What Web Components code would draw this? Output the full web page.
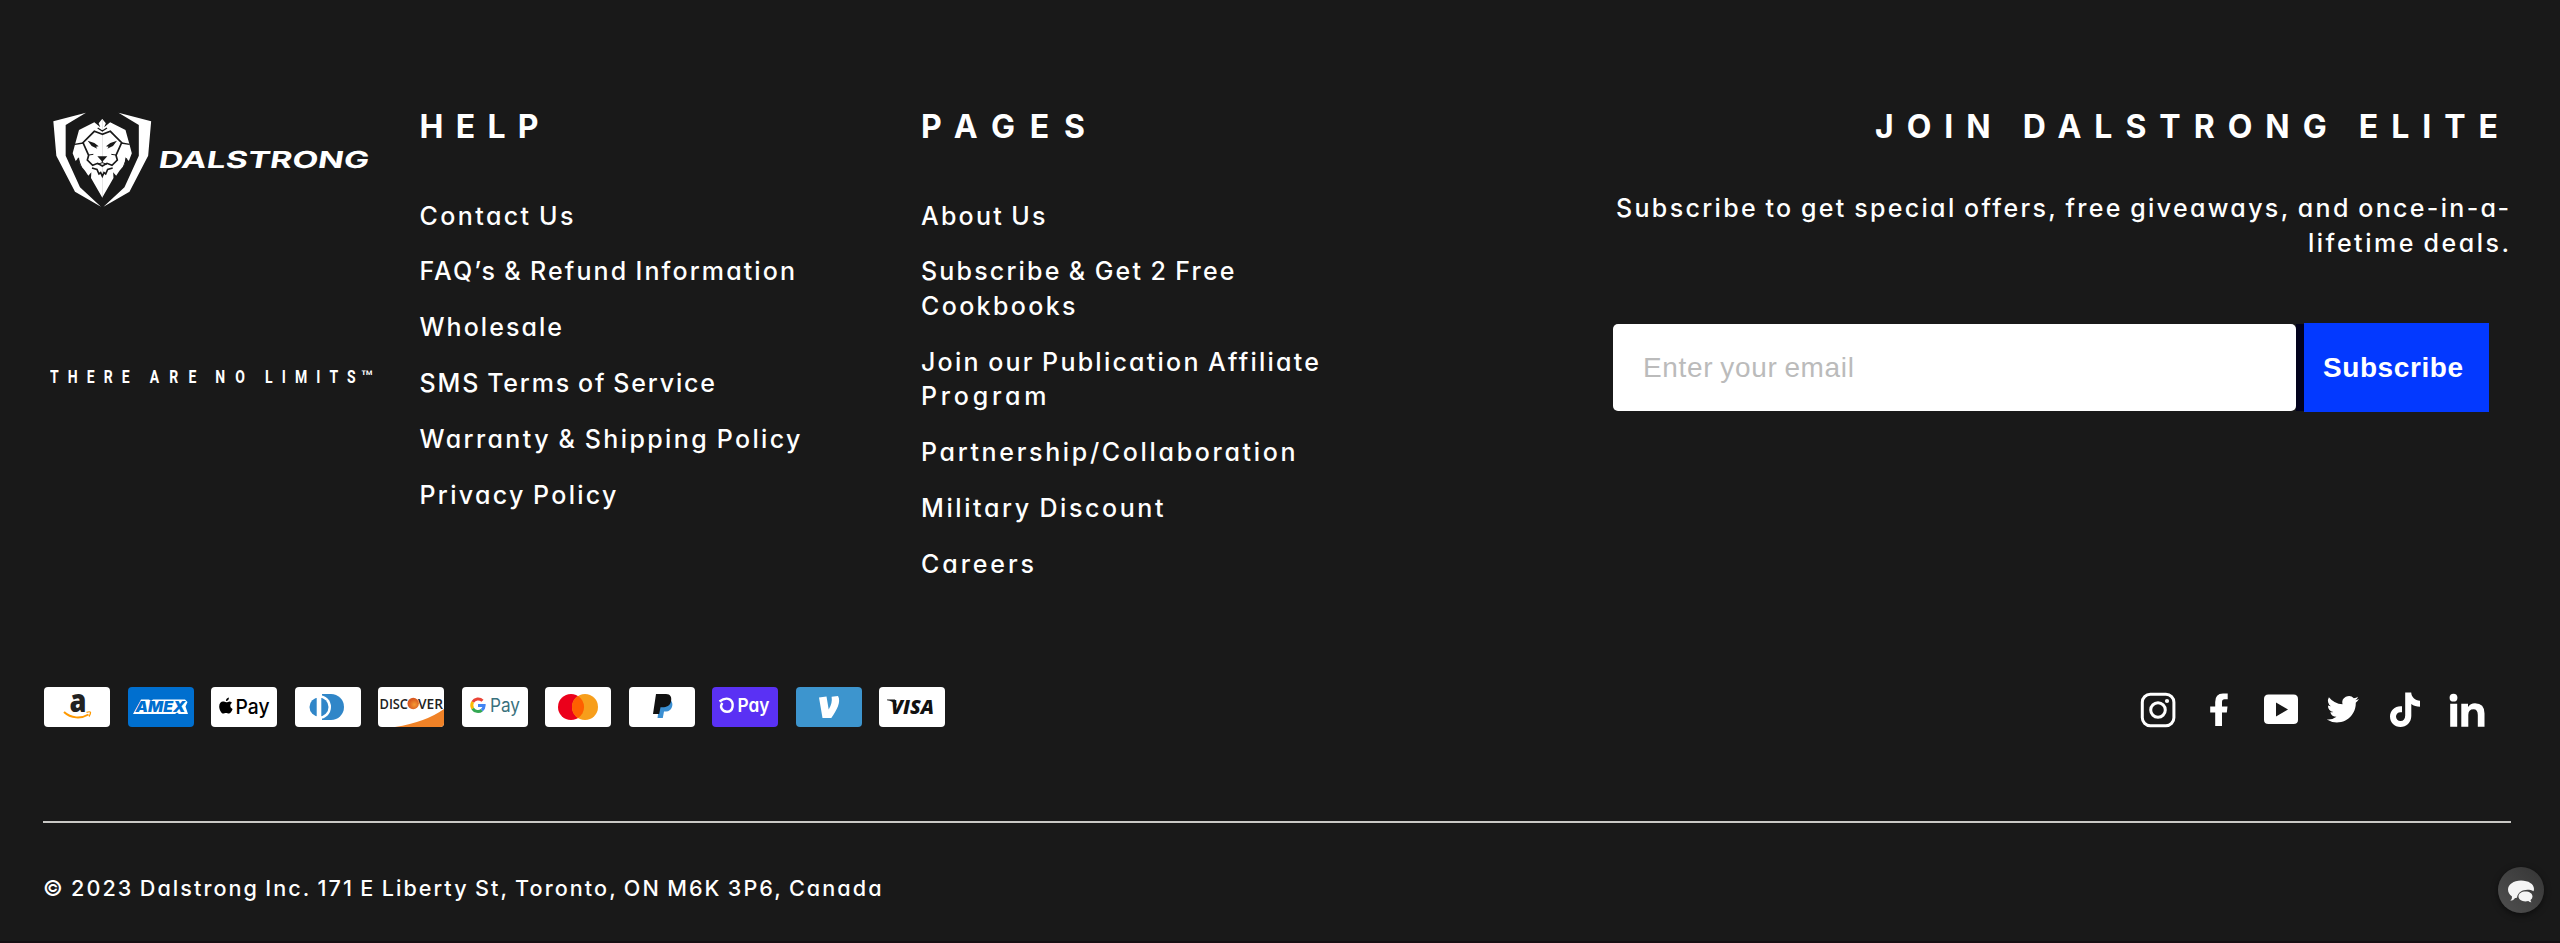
<!DOCTYPE html>
<html lang="en">
<head>
<meta charset="utf-8">
<title>Dalstrong</title>
<style>
html,body{margin:0;background:#191919}
body{color:#fff;font-family:Inter,"Open Sans",sans-serif;overflow:hidden}
</style>
</head>
<body>
<site-footer>
  <brand-mark slot="brand"></brand-mark>
  <link-column slot="nav">
    <fit-text slot="title" w="119">HELP</fit-text>
    <fit-text w="154">Contact Us</fit-text>
    <fit-text w="375.5">FAQ’s &amp; Refund Information</fit-text>
    <fit-text w="142.5">Wholesale</fit-text>
    <fit-text w="295.5">SMS Terms of Service</fit-text>
    <fit-text w="381">Warranty &amp; Shipping Policy</fit-text>
    <fit-text w="197">Privacy Policy</fit-text>
  </link-column>
  <link-column slot="nav">
    <fit-text slot="title" w="164">PAGES</fit-text>
    <fit-text w="124.5">About Us</fit-text>
    <div><fit-text w="313.5">Subscribe &amp; Get 2 Free</fit-text><fit-text w="154.5">Cookbooks</fit-text></div>
    <div><fit-text w="398">Join our Publication Affiliate</fit-text><fit-text w="125.5">Program</fit-text></div>
    <fit-text w="374.5">Partnership/Collaboration</fit-text>
    <fit-text w="242.5">Military Discount</fit-text>
    <fit-text w="113">Careers</fit-text>
  </link-column>
  <news-signup slot="signup"></news-signup>
  <payment-list slot="pay"></payment-list>
  <social-list slot="social"></social-list>
  <fit-text slot="legal" w="838.5">© 2023 Dalstrong Inc. 171 E Liberty St, Toronto, ON M6K 3P6, Canada</fit-text>
</site-footer>
<chat-bubble></chat-bubble>

<script>
class Base extends HTMLElement {
  constructor() {
    super();
    this.attachShadow({ mode: "open" }).innerHTML = this.constructor.html;
  }
}

/* One line of text, letter-spaced so that it is exactly w pixels wide. */
class FitText extends Base {
  static html = `<style>
    :host{display:block;white-space:nowrap}
    span{display:inline-block;word-spacing:-1.5px;font-feature-settings:"cv11","liga" 0,"calt" 0}
  </style><span><slot></slot></span>`;
  connectedCallback() {
    const span = this.shadowRoot.querySelector("span");
    span.style.letterSpacing = "0px";
    const n = [...this.textContent.trim()].length;
    const natural = span.getBoundingClientRect().width;
    const ls = (Number(this.getAttribute("w")) - natural) / (n - 1);
    span.style.letterSpacing = ls + "px";
    span.style.marginRight = -ls + "px";
  }
}

class SiteFooter extends Base {
  static html = `<style>
    :host{display:flex;flex-direction:column;height:943px;box-sizing:border-box;
      padding:106.5px 49px 0 43px;border-bottom:2px solid #150e12}
    .top{display:grid;grid-template-columns:376.5px 1fr 898px;height:580.5px;flex:none}
    .nav{display:grid;grid-template-columns:501.5px 1fr}
    .mid{display:flex;justify-content:space-between;height:134px;flex:none;padding:0 26.5px 0 1px}
    .legal{border-top:2px solid #c9c8c5;padding-top:47.5px;font-size:21.6px;line-height:34px;font-weight:450}
  </style>
  <div class="top"><slot name="brand"></slot><div class="nav"><slot name="nav"></slot></div><slot name="signup"></slot></div>
  <div class="mid"><slot name="pay"></slot><slot name="social"></slot></div>
  <div class="legal"><slot name="legal"></slot></div>`;
}

class LinkColumn extends Base {
  static html = `<style>
    :host{display:block}
    .t{font-size:32px;line-height:40px;font-weight:700;margin-bottom:52px}
    .l{display:flex;flex-direction:column;gap:21.7px;font-size:25px;line-height:34.3px;font-weight:450}
  </style><div class="t"><slot name="title"></slot></div><div class="l"><slot></slot></div>`;
}

class BrandMark extends Base {
  static html = `<style>
    :host{display:flex;flex-direction:column;gap:138px;padding:2px 0 0 7px}
    svg{display:block;fill:#fff}
  </style>
  <svg width="333.3" height="100" viewBox="60 55 1000 300">
    <defs><g id="h">
      <path d="M168 66L70 92L79 195L135 303L213 348L150 290L107 195V103Z"/>
      <path d="M217 84L206 98L211 110L193 95L147 118L136 158L128 188L137 211L147 200L150 222L165 240L175 255L184 245L183 262L217 321Z"/>
    </g></defs>
    <use href="#h"/><use href="#h" transform="translate(433.5 0) scale(-1 1)"/>
    <g fill="none" stroke="#191919" stroke-width="5">
      <path d="M217 131L193 122L159 156L176 194L172 208L188 224L203 218L217 226L231 218L246 224L262 208L258 194L275 156L241 122Z"/>
      <path d="M203 112L217 121L231 112M134 161L160 157M299 161L274 157" stroke-width="4"/>
      <path d="M186 232L201 236L207 250L212 246L217 257L222 246L227 250L233 236L248 232" stroke-width="5"/>
      <path d="M217 208V216L203 221M217 216L231 221M144 203L154 229M290 203L280 229M176 193L190 191M258 193L244 191" stroke-width="3"/>
    </g>
    <path fill="#191919" d="M173 150L193 157L206 167L198 168L202 174L185 166ZM261 150L241 157L228 167L236 168L232 174L249 166ZM202 197H232L217 213Z"/>
    <text transform="translate(383 233) skewX(-9)" textLength="631" lengthAdjust="spacingAndGlyphs" font-family="Inter" font-weight="650" font-size="70">DALSTRONG</text>
  </svg>
  <svg width="343.3" height="60" viewBox="60 770 1030 180" font-family="Roboto" font-weight="700" font-size="56">
    <text transform="translate(60 878) scale(.75 1)" textLength="319" lengthAdjust="spacing">THERE</text>
    <text transform="translate(359 878) scale(.75 1)" textLength="187" lengthAdjust="spacing">ARE</text>
    <text transform="translate(556 878) scale(.75 1)" textLength="118" lengthAdjust="spacing">NO</text>
    <text transform="translate(705 878) scale(.75 1)" textLength="363" lengthAdjust="spacing">LIMITS</text>
    <text transform="translate(992 878)" textLength="38" lengthAdjust="spacingAndGlyphs" font-weight="500" font-size="53">™</text>
  </svg>`;
}

class NewsSignup extends Base {
  static html = `<style>
    :host{display:flex;flex-direction:column;align-items:flex-end}
    .t{font-size:32px;line-height:40px;font-weight:700;margin:0 13px 44.5px 0}
    .p{display:flex;flex-direction:column;align-items:flex-end;font-size:25px;line-height:34.7px;font-weight:450;padding-right:2px}
    form{display:flex;gap:8px;align-self:stretch;margin:62.6px 22px 0 0;align-items:center;font-family:"Liberation Sans",Arial,sans-serif;font-size:28px}
    .in{flex:1;height:87px;border-radius:5px;background:#fff;color:#bbb;line-height:88px;padding-left:30px;box-sizing:border-box}
    .b{width:185px;height:89px;line-height:89px;background:#0339ff;color:#fff;font-weight:700;padding-left:19px;box-sizing:border-box}
    .gap{background:#02021c;width:8px;height:87px;margin:0 -8px}
  </style>
  <div class="t"><fit-text w="623">JOIN DALSTRONG ELITE</fit-text></div>
  <div class="p"><fit-text w="893">Subscribe to get special offers, free giveaways, and once-in-a-</fit-text><fit-text w="201">lifetime deals.</fit-text></div>
  <form><div class="in"><fit-text w="211">Enter your email</fit-text></div><div class="gap"></div><div class="b"><fit-text w="140">Subscribe</fit-text></div></form>`;
}

class PaymentList extends Base {
  static html = `<style>
    :host{display:flex;gap:17.5px}
    svg{display:block;width:66px;height:40px;border-radius:4px;background:#fff;overflow:visible}
  </style>
  <svg viewBox="0 0 66 40"><text x="25.5" y="25" font-family="Open Sans" font-weight="800" font-size="31" textLength="17" lengthAdjust="spacingAndGlyphs" fill="#222">a</text><path d="M20 25C27 31.5 37 32 44.5 27.5" fill="none" stroke="#f90" stroke-width="2"/><path d="M42.5 25.3Q46 24.3 46.5 25.2Q46.8 27 45 29.5" fill="none" stroke="#f90" stroke-width="1.3"/></svg>
  <svg viewBox="0 0 66 40" style="background:#006fcf"><path d="M5 27L13 12.5H21L23 14L25 12.5H57L59.5 15L57.5 19.5L60 27H51L49 25.5L47 27Z" fill="#fff"/><text x="7.5" y="25" font-family="Inter" font-weight="900" font-style="italic" font-size="14.5" textLength="50" lengthAdjust="spacingAndGlyphs" fill="#006fcf">AMEX</text></svg>
  <svg viewBox="0 0 66 40"><path d="M15.2 15.2C16.5 15.2 17.2 14.4 18.7 14.4Q20.3 14.6 21 15.8C18.5 17.3 18.8 20.8 21.6 21.9C20.8 24.3 19.2 26.6 17.8 26.6C16.6 26.6 16.3 25.9 15 25.9S13.2 26.6 12.2 26.6C10.5 26.6 8.2 22.8 8.2 19.4C8.2 16.2 10.1 14.5 12 14.5C13.4 14.5 14.3 15.2 15.2 15.2ZM14.9 14.1Q14.9 11.2 17.9 10.5Q18 13.6 14.9 14.1Z" fill="#000"/><text x="24.5" y="27" font-family="Inter" font-weight="500" font-size="20.5" textLength="34" lengthAdjust="spacingAndGlyphs">Pay</text></svg>
  <svg viewBox="0 0 66 40"><path d="M27 7H36A13 13 0 0 1 36 33H27Z" fill="#3086c8"/><circle cx="24" cy="20" r="12" fill="#fff"/><circle cx="24" cy="20" r="9.5" fill="#3086c8"/><path d="M21.7 10V30H26.3V10Z" fill="#fff"/></svg>
  <svg viewBox="0 0 66 40"><defs><radialGradient id="o" cx=".6" cy=".6"><stop offset="0" stop-color="#f59b35"/><stop offset="1" stop-color="#d95a20"/></radialGradient></defs><path d="M17 40Q48 35 66 22V36Q66 40 62 40Z" fill="#f08227"/><g font-family="Open Sans" font-weight="600" font-size="15" fill="#222"><text x="1.5" y="22" textLength="28.5" lengthAdjust="spacingAndGlyphs">DISC</text><text x="40" y="22" textLength="25" lengthAdjust="spacingAndGlyphs">VER</text></g><circle cx="35.2" cy="16.5" r="5.7" fill="url(#o)"/></svg>
  <svg viewBox="0 0 66 40"><g fill="none" stroke-width="3"><path d="M20.5 13.8A6.3 6.3 0 0 0 10.7 15" stroke="#ea4335"/><path d="M10.7 15A6.3 6.3 0 0 0 10.7 21.6" stroke="#fbbc04"/><path d="M10.7 21.6A6.3 6.3 0 0 0 19.8 23.2" stroke="#34a853"/><path d="M19.8 23.2Q22 21.5 22.1 18.6H16" stroke="#4285f4"/></g><text x="28" y="25" font-family="Inter" font-size="18.5" textLength="30" lengthAdjust="spacingAndGlyphs" fill="#39717d">Pay</text></svg>
  <svg viewBox="0 0 66 40"><circle cx="26" cy="20" r="13" fill="#eb001b"/><circle cx="40" cy="20" r="13" fill="#f79e1b"/><path d="M33 9A13 13 0 0 1 33 31A13 13 0 0 1 33 9Z" fill="#ff5f00"/></svg>
  <svg viewBox="0 0 66 40"><path d="M31 12H40C43.5 14 44.6 18 42 22C40.5 24.3 38 24.6 35 24.6L33.8 31H28.5Z" fill="#3b8fd2"/><path d="M27 7H37C41.5 7 43 10.5 42 14.5C41 19 37.5 20.2 33.5 20.2H31.5L30.2 27H24Z" fill="#111"/></svg>
  <svg viewBox="0 0 66 40" style="background:#5a31f4"><path d="M7.5 14.5Q13 10.3 17.5 12.3C22.5 15.5 21.5 24.7 15 24.7C10 24.7 7.3 19.5 10.5 16" fill="none" stroke="#fff" stroke-width="2.4"/><text x="25.5" y="25" font-family="Inter" font-weight="600" font-size="18.5" textLength="32" lengthAdjust="spacingAndGlyphs" fill="#fff" style="font-feature-settings:'cv11'">Pay</text></svg>
  <svg viewBox="0 0 66 40" style="background:#3d95ce"><path d="M23 10.5L30.5 9.5L32.7 22.5Q36.7 16 35.6 9.8L42 9C45.5 15 40.5 23.5 35.3 31H26.5Z" fill="#fff"/></svg>
  <svg viewBox="0 0 66 40"><text x="12" y="27" font-family="Open Sans" font-weight="800" font-style="italic" font-size="20" textLength="43" lengthAdjust="spacingAndGlyphs" fill="#111">VISA</text><path d="M8 12.5H16L18 19Q14 14 8 13.3Z" fill="#111"/></svg>`;
}

class SocialList extends Base {
  static html = `<style>
    :host{display:flex;gap:25.8px;padding-top:5px}
    svg{display:block;width:36px;height:36px;fill:#fff}
  </style>
  <svg viewBox="0 0 36 36"><g fill="none" stroke="#fff" stroke-width="3"><rect x="2.3" y="2.3" width="31.6" height="31.4" rx="8"/><circle cx="18" cy="18" r="7.3"/></g><circle cx="27" cy="9" r="2.1"/></svg>
  <svg viewBox="0 0 36 36"><path d="M14.2 34V20.4H9.2V14.6H14.2V10Q14.2 1.5 22 1.5H26.7V7.3H23.5Q21 7.3 21 10V14.6H26.5L25.8 20.4H21V34Z"/></svg>
  <svg viewBox="0 0 36 36"><path fill-rule="evenodd" d="M5.5 2.5H30.5Q35 2.5 35 7V28Q35 32 30.5 32H5.5Q1 32 1 28V7Q1 2.5 5.5 2.5ZM13 10.5V24.5L25 17.5Z"/></svg>
  <svg viewBox="0 0 36 36"><path transform="translate(1.2 .2) scale(1.35)" d="M24.3 5.1a9.8 9.8 0 0 1-2.8.8A4.8 4.8 0 0 0 23.6 3.3a9.8 9.8 0 0 1-3.1 1.2a4.9 4.9 0 0 0-8.4 4.5A14 14 0 0 1 2 3.8a4.9 4.9 0 0 0 1.5 6.6a4.9 4.9 0 0 1-2.2-.6v.06a4.9 4.9 0 0 0 3.9 4.8a4.9 4.9 0 0 1-2.2.1a4.9 4.9 0 0 0 4.6 3.4A9.9 9.9 0 0 1 .4 20.2a14 14 0 0 0 7.5 2.2c9.1 0 14-7.5 14-14v-.6a10 10 0 0 0 2.4-2.7z"/></svg>
  <svg viewBox="0 0 36 36"><path d="M18.2.5H24.2C24.5 5 28 8.5 33 8.8V14.8C29.8 14.8 26.5 13.7 24.3 12V24C24.3 30.5 19.3 35 13.5 35C7.5 35 3 30.5 3 24.5C3 18 8.5 13.5 15 14.3V20.3C11.5 19.5 9 21.6 9 24.5C9 27.2 11 29 13.5 29C16.5 29 18.2 27 18.2 23.5Z"/></svg>
  <svg viewBox="0 0 36 36"><circle cx="4.5" cy="5.7" r="3.9"/><path d="M1.2 11.8H8.2V34.8H1.2ZM12.3 11.8H19V15Q21.2 11.2 26 11.2Q35.5 11.2 35.5 21.5V34.8H28.8V23Q28.8 17.2 24.5 17.2Q19.3 17.2 19.3 23V34.8H12.3Z"/></svg>`;
}

class ChatBubble extends Base {
  static html = `<style>
    :host{position:absolute;left:2498px;top:866.5px;width:46px;height:46px;border-radius:50%;
      background:linear-gradient(225deg,#353535,#505050);box-shadow:0 2px 6px #0008}
    svg{display:block}
  </style>
  <svg width="46" height="46" viewBox="0 0 46 46" fill="#f5f5f5"><path d="M23 13.5C30.5 13.5 36 17 36 22Q36 23 35.5 24.2C29 21 20 23.5 19 30.5Q18 31.2 17 31C15.5 33 14 33.8 12.3 33.5Q14.5 31.5 14 29.5Q10 26.5 10 22.5C10 17.5 15.5 13.5 23 13.5Z"/><path d="M27.5 24.5C31.5 24.5 34.5 26.5 34.5 29.5Q34.5 31.5 32.5 33Q32.5 34.5 33.5 35.3Q31.5 35.3 30.3 34.1C25 35.3 20.5 33 20.5 29.5C20.5 26.5 23.5 24.5 27.5 24.5Z"/></svg>`;
}

customElements.define("site-footer", SiteFooter);
customElements.define("brand-mark", BrandMark);
customElements.define("link-column", LinkColumn);
customElements.define("news-signup", NewsSignup);
customElements.define("payment-list", PaymentList);
customElements.define("social-list", SocialList);
customElements.define("chat-bubble", ChatBubble);
customElements.define("fit-text", FitText);
</script>
</body>
</html>
